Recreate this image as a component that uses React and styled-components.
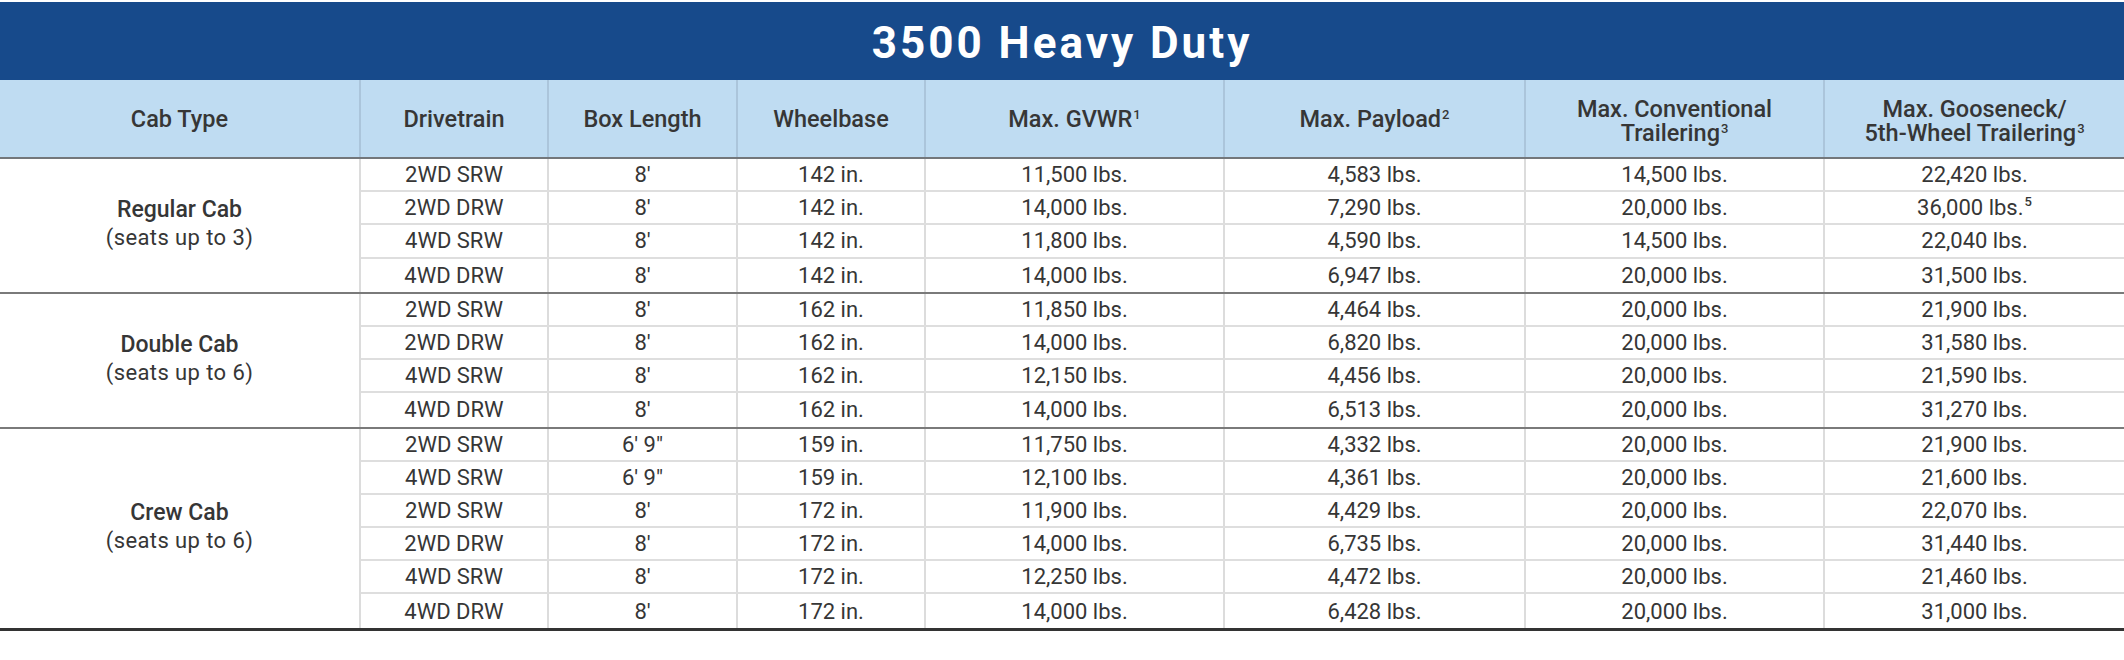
import React from "react";
import styled, { createGlobalStyle } from "styled-components";

const Global = createGlobalStyle`
  html, body { margin: 0; padding: 0; background: #ffffff; }
  body { font-family: Roboto, "Liberation Sans", Arial, sans-serif; color: #363636; }
  * { box-sizing: border-box; }
`;

const Page = styled.div`
  width: 2124px;
  padding-top: 2px;
`;

const TitleBar = styled.div`
  height: 78px;
  background: #174a8b;
  color: #ffffff;
  display: flex;
  align-items: center;
  justify-content: center;
  font-size: 44px;
  font-weight: 700;
  letter-spacing: 3px;
  padding-top: 3px;
`;

const HeaderRow = styled.div`
  display: grid;
  grid-template-columns: 359px 188px 189px 188px 299px 301px 299px 1fr;
  height: 79px;
  background: #bfdcf2;
  border-bottom: 2px solid #73777b;
`;

const HeadCell = styled.div`
  display: flex;
  align-items: center;
  justify-content: center;
  text-align: center;
  font-size: 23.5px;
  font-weight: 500;
  line-height: 24px;
  color: #363636;
  border-left: ${(p) => (p.$first ? "none" : "2px solid #abc5db")};
  padding-top: ${(p) => (p.$two ? "4px" : "0")};
`;

const Sup = styled.span`
  display: inline-block;
  font-size: 13px;
  line-height: 1;
  vertical-align: baseline;
  position: relative;
  top: ${(p) => (p.$body ? "-9px" : "-8px")};
  margin-left: 1px;
  font-weight: 500;
`;

const Group = styled.div`
  display: grid;
  grid-template-columns: 359px 1fr;
  border-bottom: ${(p) => (p.$last ? "3px solid #333333" : "2px solid #7a7a7a")};
`;

const CabCell = styled.div`
  display: flex;
  flex-direction: column;
  align-items: center;
  justify-content: center;
  font-size: 22px;
  line-height: 28px;
  color: #363636;
  padding-bottom: 2px;
`;

const CabName = styled.div`
  font-weight: 500;
  font-size: 23px;
`;

const Seats = styled.div`
  font-weight: 400;
  letter-spacing: 0.4px;
`;

const Rows = styled.div`
  border-left: 2px solid #dcdcdc;
`;

const Row = styled.div`
  display: grid;
  grid-template-columns: 186px 189px 188px 299px 301px 299px 1fr;
  height: 33.2px;
  border-bottom: ${(p) => (p.$last ? "none" : "2px solid #dedede")};
`;

const Cell = styled.div`
  display: flex;
  align-items: center;
  justify-content: center;
  font-size: 22px;
  color: #363636;
  border-left: ${(p) => (p.$first ? "none" : "2px solid #dcdcdc")};
  white-space: nowrap;
`;

const groups = [
  {
    name: "Regular Cab",
    seats: "(seats up to 3)",
    rows: [
      ["2WD SRW", "8'", "142 in.", "11,500 lbs.", "4,583 lbs.", "14,500 lbs.", "22,420 lbs."],
      ["2WD DRW", "8'", "142 in.", "14,000 lbs.", "7,290 lbs.", "20,000 lbs.", "36,000 lbs.", "5"],
      ["4WD SRW", "8'", "142 in.", "11,800 lbs.", "4,590 lbs.", "14,500 lbs.", "22,040 lbs."],
      ["4WD DRW", "8'", "142 in.", "14,000 lbs.", "6,947 lbs.", "20,000 lbs.", "31,500 lbs."],
    ],
  },
  {
    name: "Double Cab",
    seats: "(seats up to 6)",
    rows: [
      ["2WD SRW", "8'", "162 in.", "11,850 lbs.", "4,464 lbs.", "20,000 lbs.", "21,900 lbs."],
      ["2WD DRW", "8'", "162 in.", "14,000 lbs.", "6,820 lbs.", "20,000 lbs.", "31,580 lbs."],
      ["4WD SRW", "8'", "162 in.", "12,150 lbs.", "4,456 lbs.", "20,000 lbs.", "21,590 lbs."],
      ["4WD DRW", "8'", "162 in.", "14,000 lbs.", "6,513 lbs.", "20,000 lbs.", "31,270 lbs."],
    ],
  },
  {
    name: "Crew Cab",
    seats: "(seats up to 6)",
    rows: [
      ["2WD SRW", "6' 9\"", "159 in.", "11,750 lbs.", "4,332 lbs.", "20,000 lbs.", "21,900 lbs."],
      ["4WD SRW", "6' 9\"", "159 in.", "12,100 lbs.", "4,361 lbs.", "20,000 lbs.", "21,600 lbs."],
      ["2WD SRW", "8'", "172 in.", "11,900 lbs.", "4,429 lbs.", "20,000 lbs.", "22,070 lbs."],
      ["2WD DRW", "8'", "172 in.", "14,000 lbs.", "6,735 lbs.", "20,000 lbs.", "31,440 lbs."],
      ["4WD SRW", "8'", "172 in.", "12,250 lbs.", "4,472 lbs.", "20,000 lbs.", "21,460 lbs."],
      ["4WD DRW", "8'", "172 in.", "14,000 lbs.", "6,428 lbs.", "20,000 lbs.", "31,000 lbs."],
    ],
  },
];

export default function App() {
  return (
    <>
      <Global />
      <Page>
        <TitleBar>3500 Heavy Duty</TitleBar>
        <HeaderRow>
          <HeadCell $first>Cab Type</HeadCell>
          <HeadCell>Drivetrain</HeadCell>
          <HeadCell>Box Length</HeadCell>
          <HeadCell>Wheelbase</HeadCell>
          <HeadCell>
            <span>
              Max. GVWR<Sup>1</Sup>
            </span>
          </HeadCell>
          <HeadCell>
            <span>
              Max. Payload<Sup>2</Sup>
            </span>
          </HeadCell>
          <HeadCell $two>
            <span>
              Max. Conventional
              <br />
              Trailering<Sup>3</Sup>
            </span>
          </HeadCell>
          <HeadCell $two>
            <span>
              Max. Gooseneck/
              <br />
              5th-Wheel Trailering<Sup>3</Sup>
            </span>
          </HeadCell>
        </HeaderRow>
        {groups.map((g, gi) => (
          <Group key={g.name} $last={gi === groups.length - 1}>
            <CabCell>
              <CabName>{g.name}</CabName>
              <Seats>{g.seats}</Seats>
            </CabCell>
            <Rows>
              {g.rows.map((r, ri) => (
                <Row key={ri} $last={ri === g.rows.length - 1}>
                  {r.slice(0, 7).map((v, ci) => (
                    <Cell key={ci} $first={ci === 0}>
                      <span>
                        {v}
                        {ci === 6 && r[7] ? <Sup $body>{r[7]}</Sup> : null}
                      </span>
                    </Cell>
                  ))}
                </Row>
              ))}
            </Rows>
          </Group>
        ))}
      </Page>
    </>
  );
}
